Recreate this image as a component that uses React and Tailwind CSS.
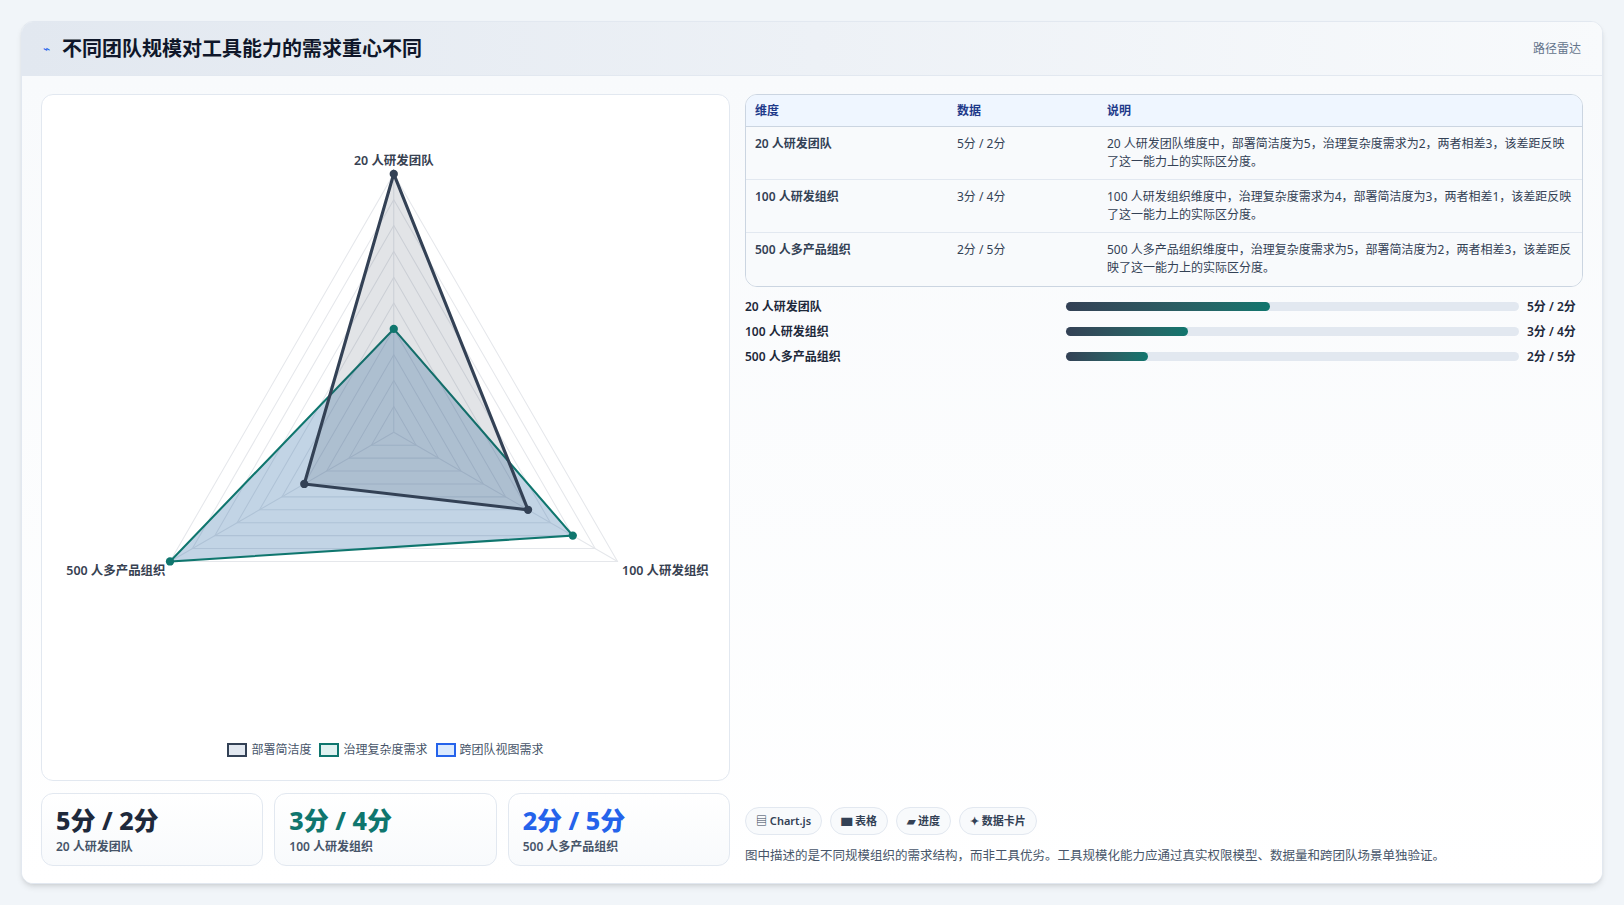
const rows = [
  ["20 人研发团队", "5分 / 2分", "20 人研发团队维度中，部署简洁度为5，治理复杂度需求为2，两者相差3，该差距反映了这一能力上的实际区分度。", 45],
  ["100 人研发组织", "3分 / 4分", "100 人研发组织维度中，治理复杂度需求为4，部署简洁度为3，两者相差1，该差距反映了这一能力上的实际区分度。", 27],
  ["500 人多产品组织", "2分 / 5分", "500 人多产品组织维度中，治理复杂度需求为5，部署简洁度为2，两者相差3，该差距反映了这一能力上的实际区分度。", 18],
];

const cx = 377, cy = 415, R = 249;
const ang = [-90, 30, 150].map((a) => (a * Math.PI) / 180);
const pt = (i, v) => [cx + Math.cos(ang[i]) * R * v / 5, cy + Math.sin(ang[i]) * R * v / 5];
const poly = (vals) => vals.map((v, i) => pt(i, v).join(",")).join(" ");

function Radar() {
  const a = [5, 3, 2];
  const b = [2, 4, 5];
  const levels = [0.5, 1, 1.5, 2, 2.5, 3, 3.5, 4, 4.5, 5];
  return (
    <svg width="689" height="687" viewBox="38 90 664 662" className="absolute inset-0">
      {levels.map((l) => (
        <polygon key={l} points={poly([l, l, l])} fill="none" stroke="#e5e7eb" strokeWidth="1" />
      ))}
      {[0, 1, 2].map((i) => (
        <line key={i} x1={cx} y1={cy} x2={pt(i, 5)[0]} y2={pt(i, 5)[1]} stroke="#e5e7eb" />
      ))}
      <polygon points={poly(b)} fill="rgba(37,99,160,0.28)" stroke="#0f766e" strokeWidth="2" />
      <polygon points={poly(a)} fill="rgba(51,65,85,0.14)" stroke="#334155" strokeWidth="3" />
      {a.map((v, i) => <circle key={"a" + i} cx={pt(i, v)[0]} cy={pt(i, v)[1]} r="4" fill="#334155" />)}
      {b.map((v, i) => <circle key={"b" + i} cx={pt(i, v)[0]} cy={pt(i, v)[1]} r="4" fill="#0f766e" />)}
      <text x="377" y="157" textAnchor="middle" fontSize="12" fontWeight="600" fill="#374151">20 人研发团队</text>
      <text x="597" y="553" fontSize="12" fontWeight="600" fill="#374151">100 人研发组织</text>
      <text x="157" y="553" textAnchor="end" fontSize="12" fontWeight="600" fill="#374151">500 人多产品组织</text>
    </svg>
  );
}

export default function App() {
  return (
    <div className="min-h-[905px] bg-[#f1f5f9] pt-[21px] pl-[21px] text-[#1e293b]" style={{ fontFamily: '"Noto Sans", "Noto Sans CJK SC", sans-serif' }}>
      <div className="w-[1582px] h-[863px] bg-white rounded-xl border border-[#e2e8f0] shadow-md overflow-hidden flex flex-col">
        <div className="h-[54px] shrink-0 flex items-center justify-between px-[21px] bg-gradient-to-r from-[#e2e8f0] to-[#f8fafc] border-b border-[#e2e8f0]">
          <div className="flex items-center gap-3">
            <span className="text-[#2563eb] text-xs">⌁</span>
            <span className="text-[20px] font-bold text-[#0f172a]">不同团队规模对工具能力的需求重心不同</span>
          </div>
          <span className="text-[12px] text-[#64748b]">路径雷达</span>
        </div>
        <div className="flex-1 flex gap-[15px] px-[19px] pt-[18px] pb-[18px] bg-gradient-to-b from-[#f8fafc] to-white">
          <div className="w-[689px] flex flex-col gap-[12px]">
            <div className="relative h-[687px] shrink-0 bg-white rounded-xl border border-[#e2e8f0]">
              <Radar />
              <div className="absolute bottom-[21px] left-0 right-0 flex justify-center gap-2 text-[12px] text-[#475569]">
                <span className="flex items-center gap-1"><span className="w-5 h-[14px] border-2 border-[#334155] bg-[#e2e8f0]" />部署简洁度</span>
                <span className="flex items-center gap-1"><span className="w-5 h-[14px] border-2 border-[#0f766e] bg-[#e0f2f1]" />治理复杂度需求</span>
                <span className="flex items-center gap-1"><span className="w-5 h-[14px] border-2 border-[#2563eb] bg-[#dbeafe]" />跨团队视图需求</span>
              </div>
            </div>
            <div className="grid grid-cols-3 gap-[11px]">
              {[["5分 / 2分", "text-[#1e293b]", "20 人研发团队"], ["3分 / 4分", "text-[#0f766e]", "100 人研发组织"], ["2分 / 5分", "text-[#2563eb]", "500 人多产品组织"]].map(([v, c, l]) => (
                <div key={l} className="h-[73px] rounded-xl border border-[#e2e8f0] bg-gradient-to-b from-white to-[#f8fafc] px-[14px] pt-[8px]">
                  <div className={"text-[25px] font-extrabold leading-[36px] " + c}>{v}</div>
                  <div className="text-[12px] text-[#475569] font-semibold">{l}</div>
                </div>
              ))}
            </div>
          </div>
          <div className="flex-1 flex flex-col">
            <div className="rounded-xl border border-[#cbd5e1] overflow-hidden text-[12px]">
              <div className="grid grid-cols-[202px_150px_1fr] h-[32px] items-center px-[9px] bg-[#eff6ff] border-b border-[#cbd5e1] font-semibold text-[#1e3a8a]">
                <span>维度</span><span>数据</span><span>说明</span>
              </div>
              {rows.map((r, i) => (
                <div key={i} className={"grid grid-cols-[202px_150px_1fr] h-[53px] pt-[8px] px-[9px] bg-[#f8fafc] text-[#334155] " + (i < 2 ? "border-b border-[#e2e8f0]" : "")}>
                  <span className="font-semibold">{r[0]}</span><span>{r[1]}</span><span className="leading-[18px]">{r[2]}</span>
                </div>
              ))}
            </div>
            <div className="flex flex-col gap-[8px] mt-[11px] text-[12px] font-semibold text-[#1e293b]">
              {rows.map((r, i) => (
                <div key={i} className="flex items-center h-[17px]">
                  <span className="w-[321px]">{r[0]}</span>
                  <div className="flex-1 h-[9px] rounded-full bg-[#e2e8f0]">
                    <div className="h-full rounded-full bg-gradient-to-r from-[#334155] to-[#0f766e]" style={{ width: r[3] + "%" }} />
                  </div>
                  <span className="w-[64px] pl-2">{r[1]}</span>
                </div>
              ))}
            </div>
            <div className="mt-auto flex gap-2 text-[11px] font-semibold text-[#334155]">
              {["▤ Chart.js", "▆ 表格", "▰ 进度", "✦ 数据卡片"].map((t) => (
                <span key={t} className="px-[10px] h-[28px] flex items-center rounded-full border border-[#e2e8f0] bg-[#f8fafc]">{t}</span>
              ))}
            </div>
            <div className="mt-[12px] text-[12.5px] text-[#475569]">图中描述的是不同规模组织的需求结构，而非工具优劣。工具规模化能力应通过真实权限模型、数据量和跨团队场景单独验证。</div>
          </div>
        </div>
      </div>
    </div>
  );
}
